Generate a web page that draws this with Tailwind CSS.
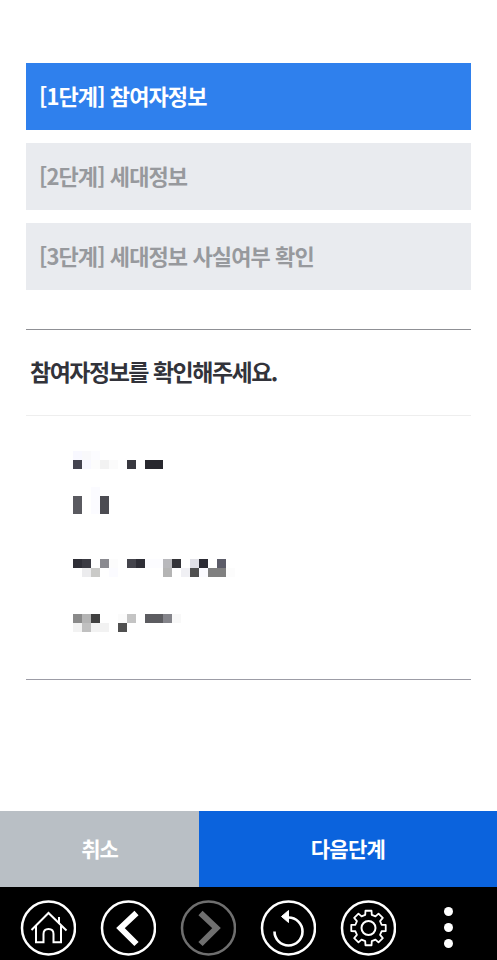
<!DOCTYPE html>
<html lang="ko">
<head>
<meta charset="utf-8">
<script src="https://cdn.jsdelivr.net/npm/@tailwindcss/browser@4"></script>
</head>
<body class="bg-white">
<div class="w-[497px] h-[960px] flex flex-col bg-white overflow-hidden font-['Noto_Sans_CJK_KR','Noto_Sans',sans-serif]">
  <main class="flex-1 flex flex-col px-[26px] pt-[63px]">
    <div class="flex flex-col gap-[13px]">
      <div class="h-[67px] bg-[#2f80ed] flex items-center pl-[13px] pb-[2px] text-white text-[22px] font-bold tracking-[-0.9px]">[1단계] 참여자정보</div>
      <div class="h-[67px] bg-[#e9ebef] flex items-center pl-[13px] pb-[2px] text-[#97999d] text-[22px] font-bold tracking-[-0.9px]">[2단계] 세대정보</div>
      <div class="h-[67px] bg-[#e9ebef] flex items-center pl-[13px] pb-[2px] text-[#97999d] text-[22px] font-bold tracking-[-0.9px]">[3단계] 세대정보 사실여부 확인</div>
    </div>
    <div class="mt-[39px] border-t border-t-[#8f9095] h-[87px] border-b border-b-[#eeeeee] flex items-center pl-[4px] pb-[2px] text-[#32333a] text-[23px] font-bold tracking-[-1.5px]">참여자정보를 확인해주세요.</div>
    <div class="h-[264px] border-b border-b-[#9c9ca6] pl-[47px] pt-[35px]">
      <div class="flex h-[9px]"><i class="w-[9px] bg-[#f8f8ff]"></i><i class="w-[9px] bg-[#f9f9fb]"></i><i class="w-[9px] bg-[#fcfcff]"></i></div>
      <div class="flex h-[9px]"><i class="w-[9px] bg-[#44444f]"></i><i class="w-[9px] bg-[#f8f8ff]"></i><i class="w-[9px] bg-[#fcfcfc]"></i><i class="w-[9px] bg-[#f2f2f2]"></i><i class="w-[9px] bg-[#fbfbfb]"></i><i class="w-[9px]"></i><i class="w-[9px] bg-[#38383f]"></i><i class="w-[9px]"></i><i class="w-[18px] bg-[#28282e]"></i></div>
      <div class="flex h-[9px] mt-[18px]"><i class="w-[18px]"></i><i class="w-[9px] bg-[#fbfbff]"></i></div>
      <div class="flex h-[18px]"><i class="w-[9px] bg-[#5a5a60]"></i><i class="w-[9px]"></i><i class="w-[9px] bg-[#fbfbff]"></i><i class="w-[9px] bg-[#4c4c52]"></i></div>
      <div class="flex h-[9px] mt-[45px]"><i class="w-[9px] bg-[#2e2e36]"></i><i class="w-[9px] bg-[#3a3a42]"></i><i class="w-[9px]"></i><i class="w-[9px] bg-[#8a8a90]"></i><i class="w-[9px] bg-[#fcfcfc]"></i><i class="w-[9px]"></i><i class="w-[9px] bg-[#44444c]"></i><i class="w-[9px] bg-[#2e2e36]"></i><i class="w-[18px] bg-[#fcfcff]"></i><i class="w-[9px] bg-[#b8b8bc]"></i><i class="w-[9px] bg-[#333338]"></i><i class="w-[9px]"></i><i class="w-[9px] bg-[#e0e0e6]"></i><i class="w-[9px] bg-[#2b2b33]"></i><i class="w-[9px]"></i><i class="w-[9px] bg-[#5c5c68]"></i></div>
      <div class="flex h-[9px]"><i class="w-[9px]"></i><i class="w-[9px] bg-[#ececee]"></i><i class="w-[9px] bg-[#cacac8]"></i><i class="w-[9px]"></i><i class="w-[9px] bg-[#fbfbff]"></i><i class="w-[45px]"></i><i class="w-[9px] bg-[#b4b4b4]"></i><i class="w-[9px]"></i><i class="w-[9px] bg-[#f0f0f4]"></i><i class="w-[9px] bg-[#505050]"></i><i class="w-[9px] bg-[#fbfbff]"></i><i class="w-[18px] bg-[#808080]"></i><i class="w-[9px] bg-[#fcfcfc]"></i></div>
      <div class="flex h-[9px] mt-[37px]"><i class="w-[9px] bg-[#8a8a8a]"></i><i class="w-[9px] bg-[#b4b4b4]"></i><i class="w-[9px] bg-[#404040]"></i><i class="w-[18px]"></i><i class="w-[9px] bg-[#fbfbfb]"></i><i class="w-[9px] bg-[#c4c4c4]"></i><i class="w-[9px]"></i><i class="w-[18px] bg-[#5c5c60]"></i><i class="w-[9px] bg-[#84848a]"></i><i class="w-[9px] bg-[#f8f8f8]"></i></div>
      <div class="flex h-[9px]"><i class="w-[9px] bg-[#f2f2f2]"></i><i class="w-[9px] bg-[#c0c0c0]"></i><i class="w-[18px] bg-[#f2f2f2]"></i><i class="w-[9px]"></i><i class="w-[9px] bg-[#505050]"></i></div>
    </div>
  </main>
  <div class="h-[76px] flex">
    <div class="w-[199px] bg-[#b9bfc5] flex items-center justify-center text-white text-[21px] font-bold tracking-[-1px]">취소</div>
    <div class="flex-1 bg-[#0b63dd] flex items-center justify-center text-white text-[21px] font-bold tracking-[-0.7px]">다음단계</div>
  </div>
  <nav class="h-[73px] bg-black flex items-start pt-[13px] pl-[20px] gap-[24px]">
    <svg class="w-[56px] h-[56px] shrink-0" viewBox="0 0 56 56" fill="none" stroke="#fff" stroke-width="2"><circle cx="28.500" cy="28" r="26.500" stroke-width="2.500"/><path d="M11.500 30 L28.500 13 L46.500 30.500 M16 26 V42.300 H23.500 V34 Q23.500 29 28.500 29 Q33.500 29 33.500 34 V42.300 H41 V26 M39 17 V24"/></svg>
    <svg class="w-[56px] h-[56px] shrink-0" viewBox="0 0 56 56" fill="none" stroke="#fff"><circle cx="28.500" cy="28" r="26.500" stroke-width="2.500"/><path d="M36.500 13 L20.500 28 L36.500 44" stroke-width="6"/></svg>
    <svg class="w-[56px] h-[56px] shrink-0" viewBox="0 0 56 56" fill="none" stroke="#6f6f6f"><circle cx="28.500" cy="28" r="26.500" stroke-width="2.500"/><path d="M20.500 13 L36.500 28 L20.500 44" stroke-width="6"/></svg>
    <svg class="w-[56px] h-[56px] shrink-0" viewBox="0 0 56 56" fill="none" stroke="#fff"><circle cx="28.500" cy="28" r="26.500" stroke-width="2.500"/><path d="M14.500 31.500 A14 14 0 1 0 28.500 17.500 L26 17.500" stroke-width="2.600"/><path d="M21.500 16.500 L28.500 10.500 V22.500 Z" fill="#fff" stroke="#fff" stroke-width="1" stroke-linejoin="round"/></svg>
    <svg class="w-[56px] h-[56px] shrink-0" viewBox="0 0 56 56" fill="none" stroke="#fff"><circle cx="28.500" cy="28" r="26.500" stroke-width="2.500"/><g transform="translate(28.500 28)"><circle r="7" stroke-width="2"/><path d="M-3.270 -13.100 L-3.040 -17.230 L3.040 -17.230 L3.270 -13.100 L6.950 -11.580 L10.030 -14.330 L14.330 -10.030 L11.580 -6.950 L13.100 -3.270 L17.230 -3.040 L17.230 3.040 L13.100 3.270 L11.580 6.950 L14.330 10.030 L10.030 14.330 L6.950 11.580 L3.270 13.100 L3.040 17.230 L-3.040 17.230 L-3.270 13.100 L-6.950 11.580 L-10.030 14.330 L-14.330 10.030 L-11.580 6.950 L-13.100 3.270 L-17.230 3.040 L-17.230 -3.040 L-13.100 -3.270 L-11.580 -6.950 L-14.330 -10.030 L-10.030 -14.330 L-6.950 -11.580 Z" stroke-width="1.800" stroke-linejoin="round"/></g></svg>
    <div class="ml-[20px] mt-[7px] w-[16px] flex flex-col items-center gap-[7px]"><i class="w-[9px] h-[9px] rounded-full bg-white"></i><i class="w-[9px] h-[9px] rounded-full bg-white"></i><i class="w-[9px] h-[9px] rounded-full bg-white"></i></div>
  </nav>
</div>
</body>
</html>
